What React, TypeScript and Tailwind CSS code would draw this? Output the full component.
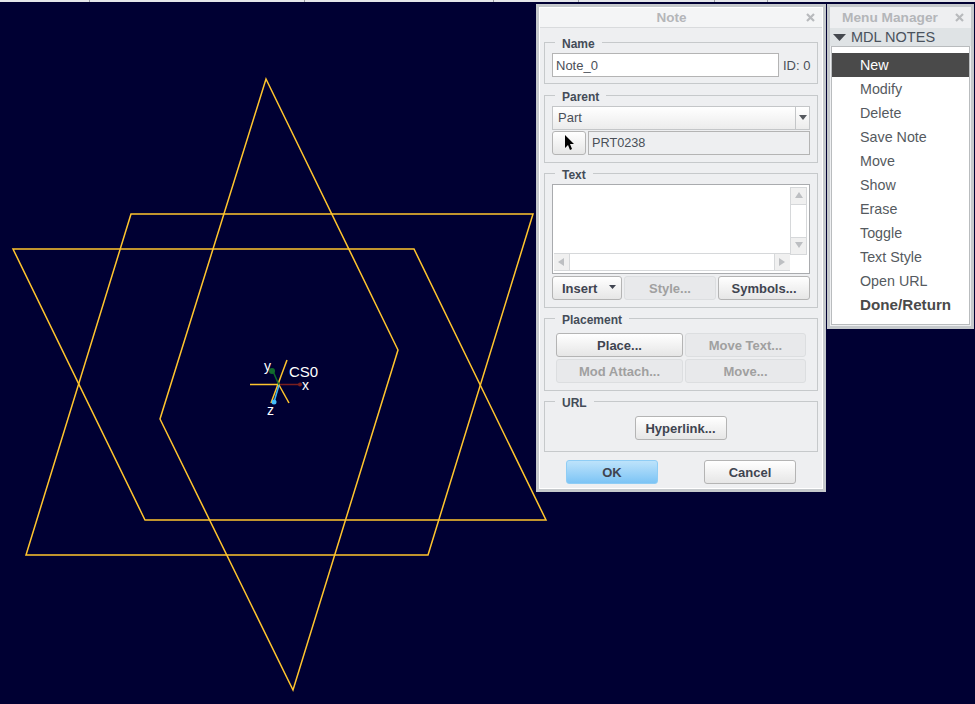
import { ReactNode } from 'react';

const menuItems = ['New', 'Modify', 'Delete', 'Save Note', 'Move', 'Show', 'Erase', 'Toggle', 'Text Style', 'Open URL'];
const topTabs = ['w-[90px]', 'w-[215px]', 'w-[189px]', 'w-[85px]', 'w-[136px]', 'w-[53px]'];

const Group = ({ title, className, children }: { title: string; className: string; children: ReactNode }) => (
    <div className={`relative mx-[5px] border border-[#c6c9cb] ${className}`}>
        <span className="absolute -top-[6px] left-[10px] bg-[#eeeff1] px-[7px] text-[12px] leading-[14px] font-bold text-[#444c58]">{title}</span>
        {children}
    </div>
);

const Btn = ({ label, width, disabled }: { label: string; width: string; disabled?: boolean }) => (
    <div
        className={`flex h-[24px] items-center justify-center rounded-[3px] border pt-px text-[13px] font-bold ${width} ${
            disabled
                ? 'border-[#dcdee0] bg-[#e8e9eb] text-[#a0a0a0]'
                : 'border-[#b4b4b4] bg-gradient-to-b from-white to-[#e6e6e6] text-[#3f4450]'
        }`}
    >
        {label}
    </div>
);

const Arrow = ({ dir }: { dir: 'up' | 'down' | 'left' | 'right' }) => {
    const points = {
        up: '1,7 9,7 5,1',
        down: '1,1 9,1 5,7',
        left: '7,1 7,9 1,5',
        right: '1,1 1,9 7,5',
    }[dir];
    return (
        <svg width="10" height="10" viewBox="0 0 10 10">
            <polygon points={points} fill="#bdbfc2" />
        </svg>
    );
};

const CloseIcon = ({ className }: { className: string }) => (
    <svg className={className} width="9" height="9" viewBox="0 0 9 9">
        <path d="M1 1L8 8M8 1L1 8" stroke="#b8babd" strokeWidth="2.200" />
    </svg>
);

const Drawing = () => (
    <svg className="absolute inset-0" width="975" height="704" viewBox="0 0 975 704">
        <g fill="none" stroke="#ffc52e" strokeWidth="1.500">
            <polygon points="131,214 533,214 428,555 26,555" />
            <polygon points="13,249 414,249 546,520 145,520" />
            <polygon points="266,79 398,350 293,690 160,419" />
            <path d="M250 384.500H280" />
            <path d="M287 360L271 403" />
            <path d="M279 385L289 403" />
        </g>
        <path d="M272 369L279 385" stroke="#0f6b2c" strokeWidth="1.500" />
        <circle cx="272" cy="371" r="3" fill="#126b2e" />
        <path d="M280 384.500H300" stroke="#7a1f1f" strokeWidth="1.500" />
        <circle cx="300" cy="384.500" r="2" fill="#7a1f1f" />
        <path d="M279 385L274 402" stroke="#3fb4f0" strokeWidth="1.500" />
        <circle cx="274" cy="402" r="2.500" fill="#45bdfa" />
        <g fill="#ffffff" fontFamily="'Liberation Sans', sans-serif">
            <text x="289" y="377" fontSize="15">CS0</text>
            <text x="264" y="371" fontSize="14">y</text>
            <text x="302" y="390" fontSize="14">x</text>
            <text x="267" y="415" fontSize="14">z</text>
        </g>
    </svg>
);

const App = () => (
    <div className="relative h-[704px] w-[975px] overflow-hidden bg-[#000033] font-['Liberation_Sans',Arial,sans-serif]">
        <div className="absolute top-0 left-0 flex h-[2px] w-full bg-[#e4e6ea]">
            {topTabs.map((w) => (
                <div key={w} className={`h-full border-r border-[#9a9da3] ${w}`} />
            ))}
        </div>
        <Drawing />

        {/* Note dialog */}
        <div className="absolute top-[4px] left-[536px] h-[488px] w-[290px] border-[3px] border-[#c5c9cc] bg-[#eeeff1] shadow-[inset_0_0_0_1px_#ffffff]">
            <div className="mx-px mt-px flex h-[20px] items-center justify-center border-b border-[#d9dbdd] bg-[#f4f5f6] pt-[2px] pr-[19px] text-[13.500px] font-bold text-[#b4b6b9]">
                Note
                <CloseIcon className="absolute top-[6px] right-[8px]" />
            </div>

            <Group title="Name" className="mt-[14px] h-[42px]">
                <div className="mt-[10px] ml-[7px] flex items-center">
                    <div className="flex h-[24px] w-[227px] items-center border border-[#b4b4b4] bg-white pt-[2px] pl-[3px] text-[13px] text-[#4a4f58]">Note_0</div>
                    <span className="mt-[2px] ml-[4px] text-[13px] text-[#4a4f58]">ID: 0</span>
                </div>
            </Group>

            <Group title="Parent" className="mt-[11px] h-[68px]">
                <div className="mx-[7px] mt-[10px] flex h-[24px] items-center border border-[#c4c6c8] bg-gradient-to-b from-white to-[#ececec] pl-[5px] text-[13px] text-[#4a4f58]">
                    <span className="flex-1">Part</span>
                    <div className="flex h-full w-[14px] items-center justify-center border-l border-[#c4c6c8]">
                        <svg width="8" height="6" viewBox="0 0 8 6"><polygon points="0,0 8,0 4,5" fill="#55585e" /></svg>
                    </div>
                </div>
                <div className="mx-[7px] mt-[1px] flex gap-[2px]">
                    <div className="flex h-[24px] w-[34px] items-center justify-center rounded-[3px] border border-[#b4b4b4] bg-gradient-to-b from-white to-[#e6e6e6]">
                        <svg width="10" height="16" viewBox="0 0 10 16"><polygon points="1,0 1,13 4,10 6,15 8,14 6,9 10,9" fill="#000" /></svg>
                    </div>
                    <div className="flex h-[24px] flex-1 items-center border border-[#b4b4b4] bg-[#eeeff1] pt-[2px] pl-[3px] text-[12.700px] text-[#4a4f58]">PRT0238</div>
                </div>
            </Group>

            <Group title="Text" className="mt-[10px] h-[135px]">
                <div className="mx-[7px] mt-[10px] flex h-[90px] border border-[#a9abae] bg-white p-px">
                    <div className="flex flex-1 flex-col">
                        <div className="flex-1" />
                        <div className="mb-px flex h-[18px] border-y border-[#d6d8da] bg-white">
                            <div className="flex w-[16px] items-center justify-center border-r border-[#d6d8da] bg-[#f0f0f0]"><Arrow dir="left" /></div>
                            <div className="flex-1" />
                            <div className="flex w-[16px] items-center justify-center border-l border-[#d6d8da] bg-[#f0f0f0]"><Arrow dir="right" /></div>
                        </div>
                    </div>
                    <div className="mt-px mr-px flex h-[68px] w-[17px] flex-col border border-[#d6d8da]">
                        <div className="flex h-[17px] items-center justify-center border-b border-[#d6d8da] bg-[#f0f0f0]"><Arrow dir="up" /></div>
                        <div className="flex-1" />
                        <div className="flex h-[17px] items-center justify-center border-t border-[#d6d8da] bg-[#f0f0f0]"><Arrow dir="down" /></div>
                    </div>
                </div>
                <div className="mx-[7px] mt-[2px] flex gap-[2px]">
                    <div className="relative flex h-[24px] w-[70px] items-center rounded-[3px] border border-[#b4b4b4] bg-gradient-to-b from-white to-[#e6e6e6] pt-px pl-[9px] text-[13px] font-bold text-[#3f4450]">
                        Insert
                        <svg className="absolute top-[8px] right-[5px]" width="7" height="5" viewBox="0 0 7 5"><polygon points="0,0 7,0 3.500,4" fill="#3f4450" /></svg>
                    </div>
                    <Btn label="Style..." width="w-[92px]" disabled />
                    <Btn label="Symbols..." width="w-[92px]" />
                </div>
            </Group>

            <Group title="Placement" className="mt-[10px] h-[73px]">
                <div className="mx-[11px] mt-[14px] grid grid-cols-[127px_121px] gap-[2px]">
                    <Btn label="Place..." width="w-full" />
                    <Btn label="Move Text..." width="w-full" disabled />
                    <Btn label="Mod Attach..." width="w-full" disabled />
                    <Btn label="Move..." width="w-full" disabled />
                </div>
            </Group>

            <Group title="URL" className="mt-[10px] h-[51px]">
                <div className="mt-[14px] flex justify-center pr-[1px]">
                    <Btn label="Hyperlink..." width="w-[92px]" />
                </div>
            </Group>

            <div className="mt-[8px] flex justify-between px-[27px]">
                <div className="flex h-[24px] w-[92px] items-center justify-center rounded-[3px] border border-[#8fcdf5] bg-gradient-to-b from-[#bde3fb] to-[#7cc4f5] pt-px text-[13px] font-bold text-[#3f4450]">OK</div>
                <Btn label="Cancel" width="w-[92px]" />
            </div>
        </div>

        {/* Menu Manager */}
        <div className="absolute top-[4px] left-[827px] h-[325px] w-[147px] border-[3px] border-[#c5c9cc] bg-[#eeeff1]">
            <div className="flex h-[21px] items-center pt-px pl-[12px] text-[13.700px] font-bold text-[#b4b6b9]">
                Menu Manager
                <CloseIcon className="absolute top-[6px] right-[7px]" />
            </div>
            <div className="flex h-[18px] items-center bg-[#dfe3e5] pt-px pl-[3px] text-[14.500px] text-[#4a525c]">
                <svg width="13" height="7" viewBox="0 0 13 7"><polygon points="0,0 13,0 6.500,7" fill="#44484e" /></svg>
                <span className="ml-[5px]">MDL NOTES</span>
            </div>
            <div className="mx-[1px] h-[279px] border border-[#b9bcbe] bg-white pt-[6px]">
                {menuItems.map((item, i) => (
                    <div
                        key={item}
                        className={`flex h-[24px] items-center pt-px pl-[28px] text-[14.300px] ${i === 0 ? 'bg-[#4a4a4a] text-white' : 'text-[#555a60]'}`}
                    >
                        {item}
                    </div>
                ))}
                <div className="flex h-[24px] items-center pt-px pl-[28px] text-[15.200px] font-bold text-[#4a4a4a]">Done/Return</div>
            </div>
        </div>
    </div>
);

export default App;
